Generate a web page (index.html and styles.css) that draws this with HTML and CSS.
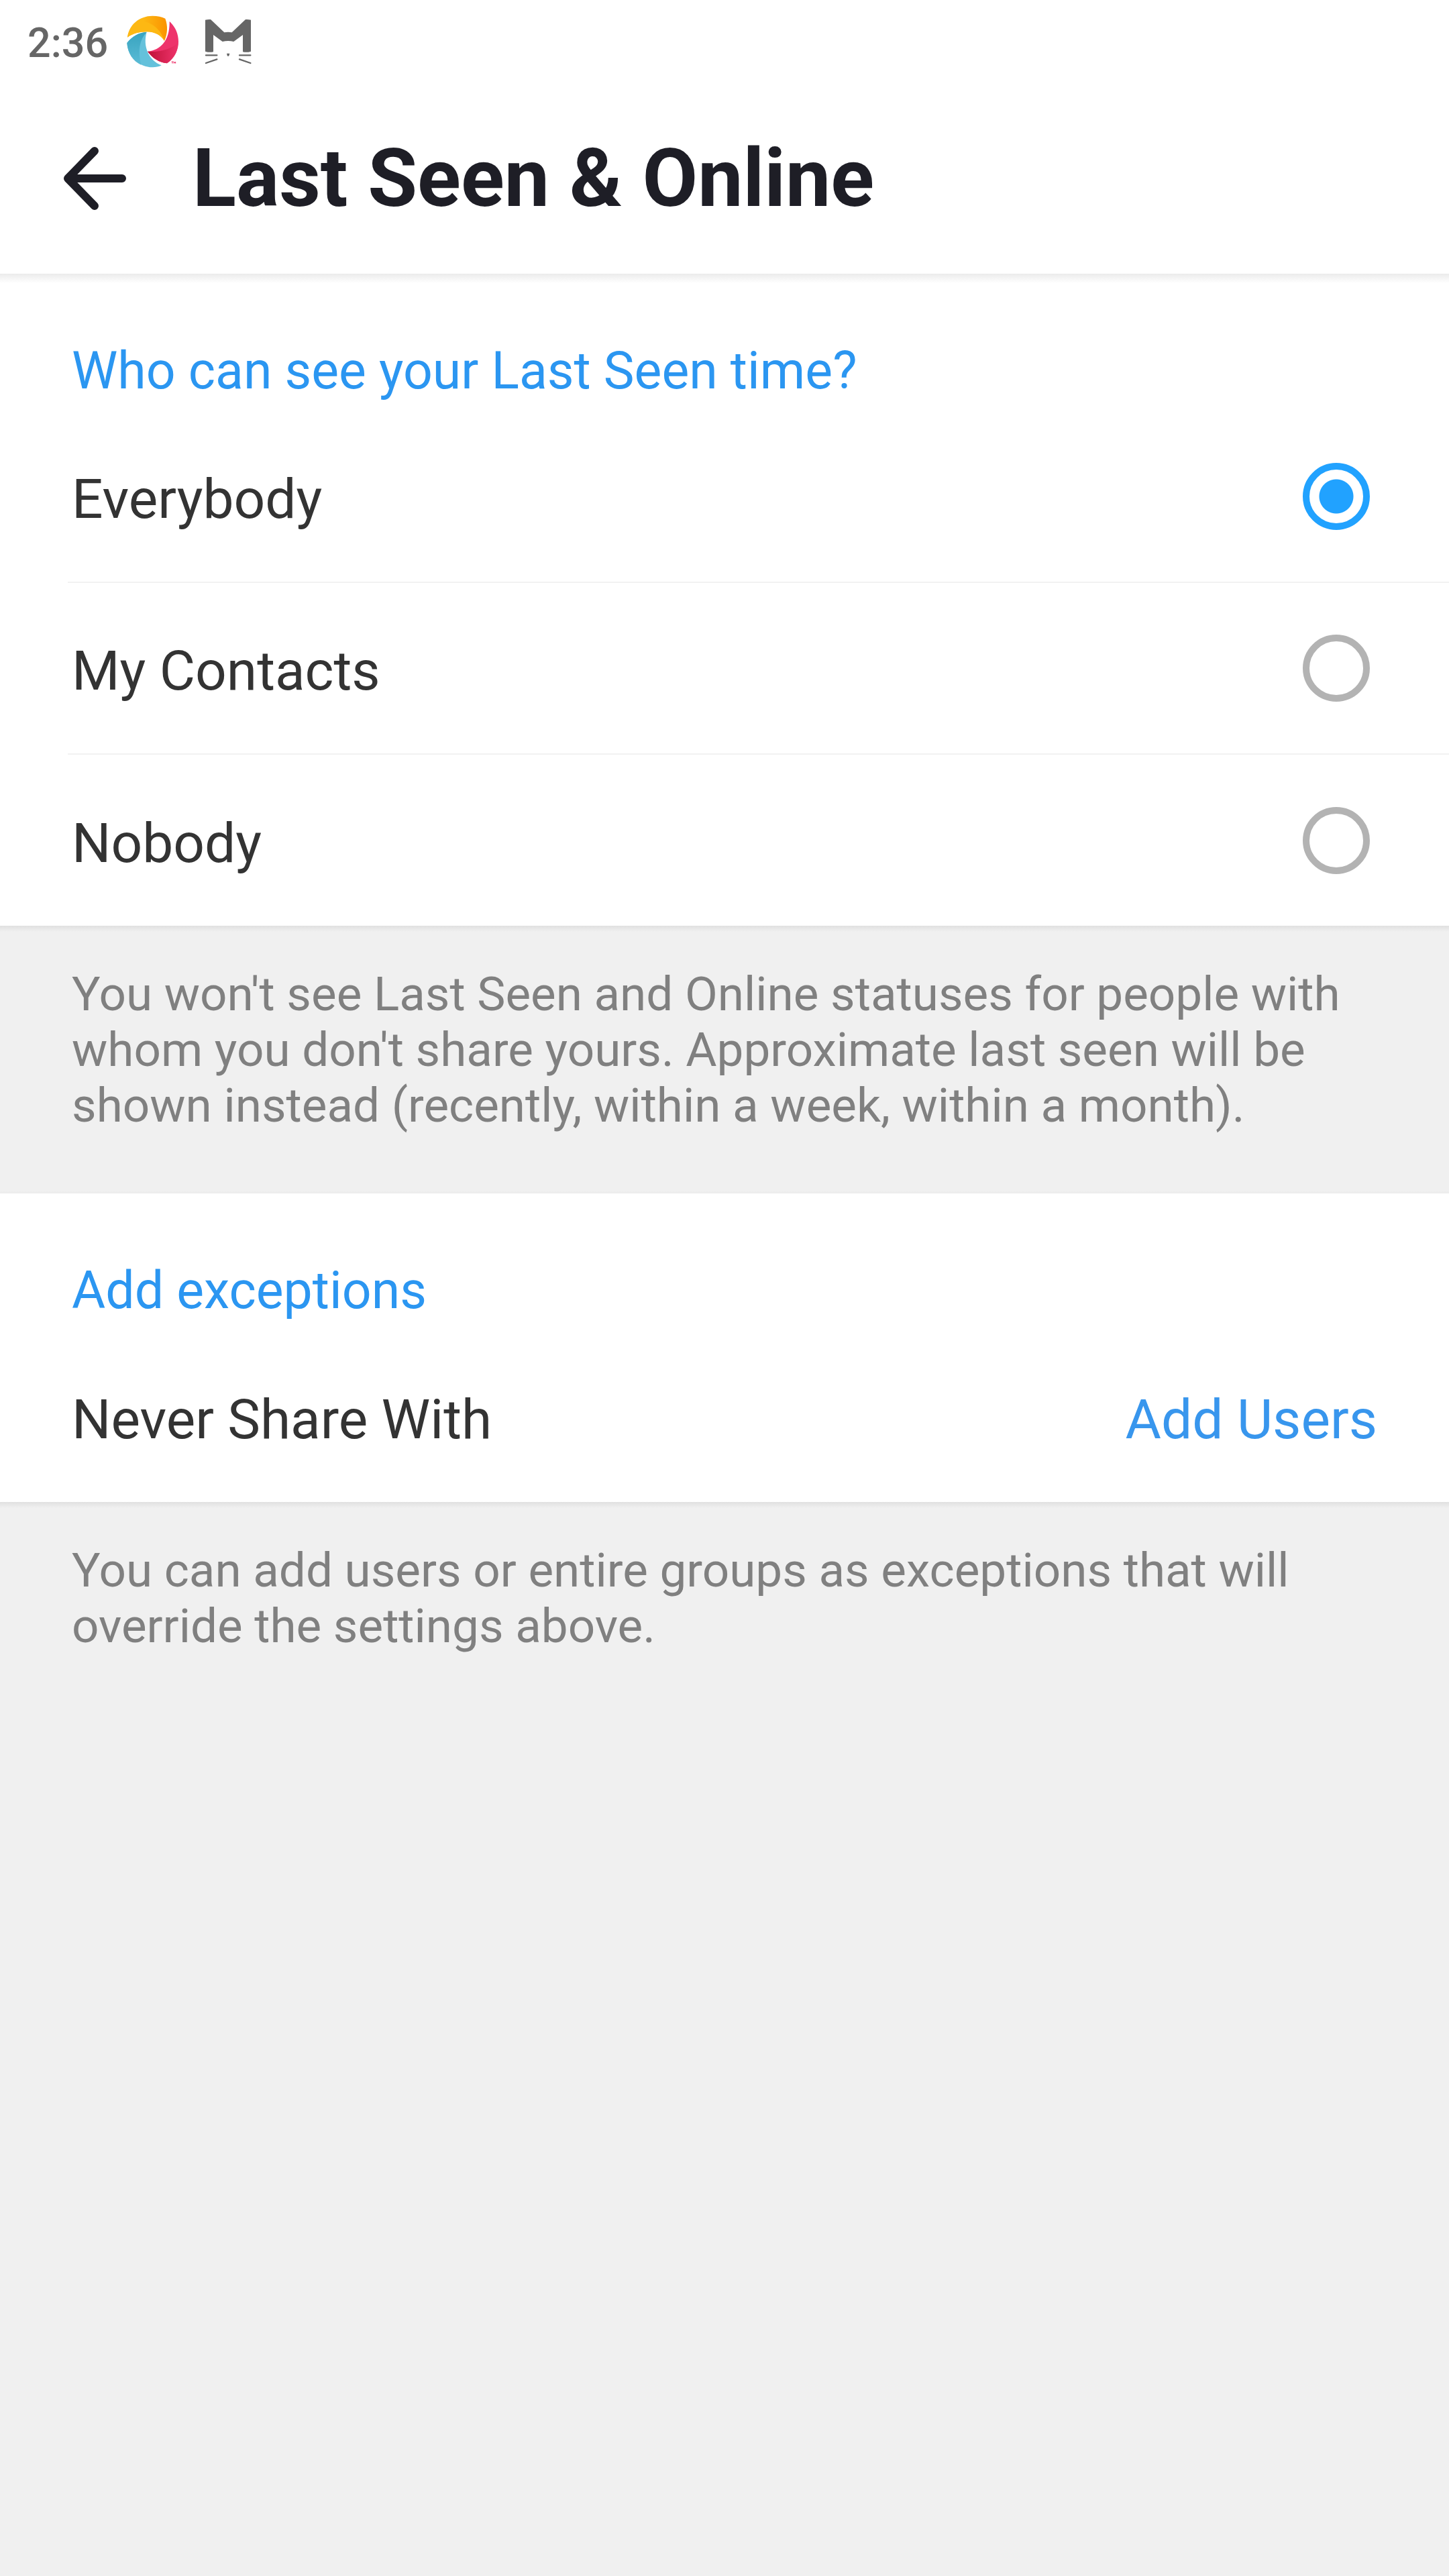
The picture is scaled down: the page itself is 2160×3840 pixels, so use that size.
FILE: index.html
```html
<!DOCTYPE html>
<html lang="en">
<head>
<meta charset="utf-8">
<meta name="viewport" content="width=device-width, initial-scale=1">
<title>Last Seen &amp; Online</title>
<link rel="stylesheet" href="styles.css">
</head>
<body>
<div class="status-bar">
  <span class="time">2:36</span>
  <svg class="status-logo" viewBox="567 67 234 234" aria-hidden="true">
    <defs>
      <linearGradient id="amber" x1="0" x2="1"><stop offset=".4" stop-color="#fdb813"/><stop offset="1" stop-color="#fb9300"/></linearGradient>
      <linearGradient id="crimson" x1="0" x2="1"><stop offset="0" stop-color="#bf1238"/><stop offset="1" stop-color="#ee336b"/></linearGradient>
      <linearGradient id="teal" x1="0" x2="0" y1="1" y2="0"><stop offset="0" stop-color="#5bbcd6"/><stop offset="1" stop-color="#38a3bf"/></linearGradient>
    </defs>
    <path fill="url(#amber)" d="M570 165C576 110 622 69 682 69C705 69 724 73 739 81C751 113 750 148 735 181C722 156 690 139 656 140C622 140 594 148 570 165Z"/>
    <path fill="#fdb813" d="M570 165C577 130 597 102 624 90C676 95 718 125 735 181C722 156 690 139 656 140C622 140 594 148 570 165Z"/>
    <path fill="#ee336b" d="M758 94C784 117 798 149 798 184C798 225 779 259 747 281C712 277 681 258 660 228C720 222 760 177 758 94Z"/>
    <path fill="url(#crimson)" d="M660 228C712 233 762 219 796 190C796 228 777 260 747 281C712 277 681 258 660 228Z"/>
    <path fill="#64c1db" d="M568 190C590 160 622 143 656 141C638 205 664 267 722 290C710 297 697 299 682 299C622 299 572 252 568 190Z"/>
    <path fill="url(#teal)" d="M568 190C590 160 622 143 656 141C624 176 615 224 631 288C595 272 571 237 568 190Z"/>
    <path fill="none" stroke="#ee336b" stroke-width="3" d="M767 274H776M771 274V282M778 282V274L782 279L785 274V282"/>
  </svg>
  <svg class="status-cat" viewBox="915 84 210 204" aria-hidden="true">
    <g fill="#666">
      <path d="M918 89Q930 86 942 87L1003 145Q1020 142 1037 145L1098 87Q1110 86 1122 89V230Q1104 236 1086 232V156L1045 186Q1020 180 995 186L954 156V232Q936 236 918 230Z"/>
      <path d="M1014 239H1027Q1026 249 1020 252Q1015 249 1014 239Z"/>
    </g>
    <path fill="none" stroke="#666" stroke-width="7" stroke-linecap="round" d="M921 247H970M1071 247H1120M921 282L970 265M1120 282L1071 265"/>
  </svg>
</div>

<header class="app-bar">
  <button class="back" type="button" aria-label="Back">
    <svg viewBox="0 0 96 94" aria-hidden="true"><path d="M47 6L7 47L47 88M8 47H88" fill="none" stroke="currentColor" stroke-width="12" stroke-linecap="round" stroke-linejoin="round"/></svg>
  </button>
  <h1 class="title">Last Seen &amp; Online</h1>
</header>

<main>
  <section class="card card-first" role="radiogroup" aria-labelledby="who">
    <h2 class="card-title" id="who">Who can see your Last Seen time?</h2>
    <div class="row divided">
      <label class="label" for="everybody">Everybody</label>
      <input class="radio" type="radio" name="visibility" id="everybody" checked>
    </div>
    <div class="row divided">
      <label class="label" for="contacts">My Contacts</label>
      <input class="radio" type="radio" name="visibility" id="contacts">
    </div>
    <div class="row">
      <label class="label" for="nobody">Nobody</label>
      <input class="radio" type="radio" name="visibility" id="nobody">
    </div>
  </section>
  <p class="note note-between">You won't see Last Seen and Online statuses for people with whom you don't share yours. Approximate last seen will be shown instead (recently, within a week, within a month).</p>

  <section class="card">
    <h2 class="card-title">Add exceptions</h2>
    <div class="row row-action">
      <span class="label" id="never">Never Share With</span>
      <button class="action" type="button" aria-describedby="never">Add Users</button>
    </div>
  </section>
  <p class="note">You can add users or entire groups as exceptions that will override the settings above.</p>
</main>
</body>
</html>
```
FILE: styles.css
```css
* {
  box-sizing: border-box;
}

body {
  margin: 0;
  min-height: 100vh;
  background: #f0f0f0;
  color: #333;
  font-family: Roboto, "Noto Sans", sans-serif;
}

h1,
h2,
p {
  margin: 0;
  font-weight: 400;
}

button {
  padding: 0;
  border: 0;
  background: none;
  font-family: inherit;
}

.status-bar {
  display: flex;
  align-items: center;
  height: 123px;
  padding-left: 41px;
  background: #fff;
}

.time {
  padding-top: 4px;
  color: #666;
  font-size: 61px;
  font-weight: 500;
  line-height: 72px;
}

.status-logo {
  width: 78px;
  height: 78px;
  margin-left: 28px;
}

.status-cat {
  width: 70px;
  height: 68px;
  margin-left: 38px;
}

.app-bar {
  display: flex;
  align-items: center;
  gap: 97px;
  height: 285px;
  padding: 0 94px;
  background: #fff;
  color: #1e1e26;
}

.back {
  display: flex;
  color: inherit;
}

.back svg {
  width: 96px;
  height: 94px;
}

.title {
  font-size: 120px;
  font-weight: 700;
  line-height: 140px;
}

.card {
  background: #fff;
}

.card-first {
  background: linear-gradient(#ebebeb, #fff 14px);
}

.card-title {
  padding: 100px 107px 15px;
  color: #2b96f1;
  font-size: 77px;
  line-height: 90px;
}

.row {
  display: flex;
  align-items: center;
  justify-content: space-between;
  height: 255px;
  margin-left: 101px;
  padding: 0 118px 0 6px;
}

.divided {
  height: 256px;
  border-bottom: 2px solid #f2f2f2;
}

.row-action {
  padding-right: 107px;
}

.label,
.action {
  padding-top: 8px;
  font-size: 82px;
  line-height: 96px;
}

.action {
  color: #3896ed;
}

.radio {
  appearance: none;
  width: 100px;
  height: 100px;
  margin: 0;
  border: 10px solid #b3b3b3;
  border-radius: 50%;
}

.radio:checked {
  border-color: #21a2ff;
  background: radial-gradient(circle, #21a2ff 25px, #fff 26px);
}

.note {
  padding: 60px 107px 0;
  background: linear-gradient(#e0e0e0, #f0f0f0 9px);
  color: #808080;
  font-size: 71px;
  line-height: 83px;
}

.note-between {
  padding-bottom: 90px;
  background: linear-gradient(#e0e0e0, #f0f0f0 9px calc(100% - 4px), #ebebeb);
}
```
